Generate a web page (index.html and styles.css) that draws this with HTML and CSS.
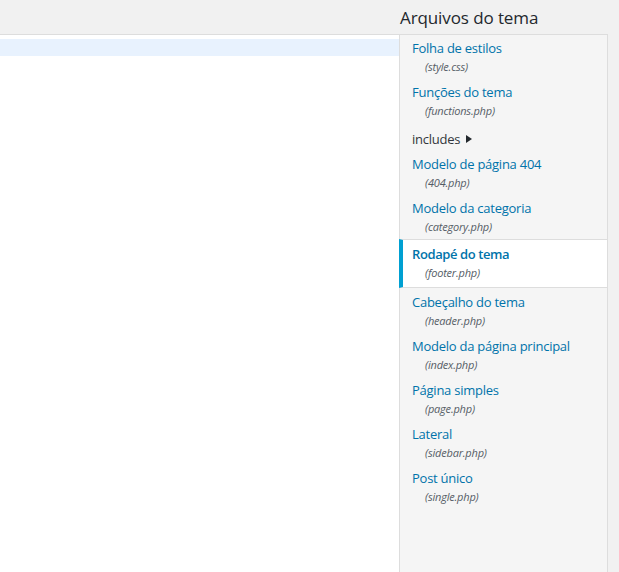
FILE: index.html
```html
<!DOCTYPE html>
<html lang="pt-BR">
<head>
<meta charset="utf-8">
<title>Arquivos do tema</title>
<link rel="stylesheet" href="styles.css">
</head>
<body>
<div class="page">
  <div class="editor-col">
    <div class="editor">
      <div class="line-hl"></div>
    </div>
  </div>
  <div class="side-col">
    <h2 class="side-title">Arquivos do tema</h2>
    <ul class="files">
      <li class="file"><a href="#">Folha de estilos</a><span class="fname">(style.css)</span></li>
      <li class="file"><a href="#">Funções do tema</a><span class="fname">(functions.php)</span></li>
      <li class="folder"><span class="folder-name">includes</span><span class="caret"></span></li>
      <li class="file"><a href="#">Modelo de página 404</a><span class="fname">(404.php)</span></li>
      <li class="file"><a href="#">Modelo da categoria</a><span class="fname">(category.php)</span></li>
      <li class="file active"><a href="#">Rodapé do tema</a><span class="fname">(footer.php)</span></li>
      <li class="file"><a href="#">Cabeçalho do tema</a><span class="fname">(header.php)</span></li>
      <li class="file"><a href="#">Modelo da página principal</a><span class="fname">(index.php)</span></li>
      <li class="file"><a href="#">Página simples</a><span class="fname">(page.php)</span></li>
      <li class="file"><a href="#">Lateral</a><span class="fname">(sidebar.php)</span></li>
      <li class="file"><a href="#">Post único</a><span class="fname">(single.php)</span></li>
    </ul>
  </div>
</div>
</body>
</html>
```
FILE: styles.css
```css
html, body {
  margin: 0;
  padding: 0;
  height: 100%;
  overflow: hidden;
}
body {
  background: #f1f1f1;
  font-family: "Open Sans", "Noto Sans", sans-serif;
  color: #32373c;
}
.page {
  display: flex;
  height: 100%;
}
.editor-col {
  width: 399px;
  padding-top: 34px;
  display: flex;
  flex-direction: column;
}
.editor {
  flex: 1;
  background: #fff;
  border-top: 1px solid #dddddd;
  padding-top: 4px;
}
.line-hl {
  height: 17px;
  background: #e8f2fe;
}
.side-col {
  width: 209px;
  display: flex;
  flex-direction: column;
}
.side-title {
  margin: 0;
  height: 34px;
  box-sizing: border-box;
  padding: 6px 0 0 1px;
  font-size: 17px;
  font-weight: 400;
  line-height: 24px;
  color: #23282d;
  letter-spacing: -0.1px;
}
.files {
  flex: 1;
  list-style: none;
  margin: 0;
  padding: 0;
  background: #f5f5f5;
  border: 1px solid #dddddd;
  border-bottom: 0;
}
.file {
  padding: 3px 0 3px 12px;
}
.file a {
  display: block;
  font-size: 13px;
  line-height: 20px;
  color: #0073aa;
  text-decoration: none;
  letter-spacing: -0.25px;
}
.fname {
  display: block;
  padding-left: 13px;
  font-size: 11px;
  line-height: 18px;
  font-style: italic;
  color: #555d66;
  letter-spacing: -0.2px;
}
.folder {
  padding: 6px 0 2px 12px;
  line-height: 20px;
  display: flex;
  align-items: center;
}
.folder-name {
  font-size: 13px;
  color: #32373c;
  letter-spacing: -0.25px;
}
.caret {
  margin-left: 6px;
  width: 0;
  height: 0;
  border-top: 4px solid transparent;
  border-bottom: 4px solid transparent;
  border-left: 6px solid #23282d;
}
.file.active {
  background: #fff;
  margin-left: -1px;
  margin-bottom: 1px;
  padding: 4px 0 5px 9px;
  border-left: 4px solid #00a0d2;
  border-top: 1px solid #dddddd;
  border-bottom: 1px solid #dddddd;
}
.file.active a {
  font-weight: 600;
  letter-spacing: -0.4px;
}
.file.active .fname {
  padding-left: 13px;
}
```
